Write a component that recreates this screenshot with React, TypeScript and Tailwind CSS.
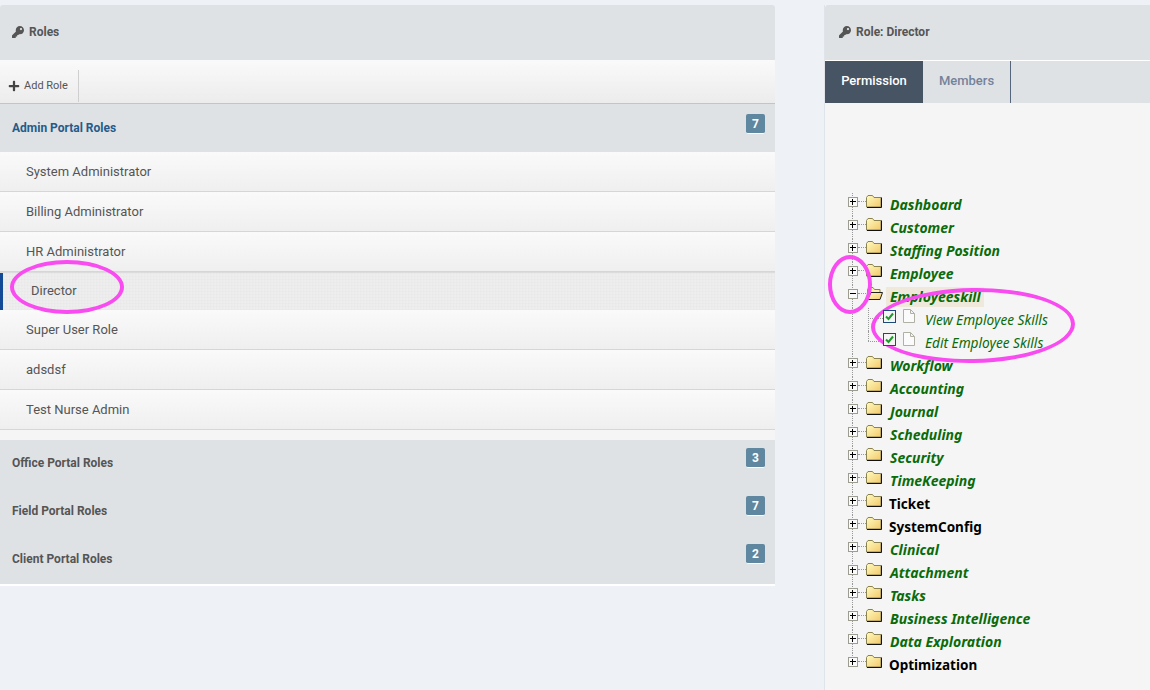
import { FaKey, FaPlus } from "react-icons/fa";

const adminRoles = ["System Administrator", "Billing Administrator", "HR Administrator", "Director", "Super User Role", "adsdsf", "Test Nurse Admin"];

const otherGroups = [
  { name: "Office Portal Roles", count: 3 },
  { name: "Field Portal Roles", count: 7 },
  { name: "Client Portal Roles", count: 2 },
];

type Tone = "green" | "black";

const treeTop: { name: string; tone: Tone }[] = [
  { name: "Dashboard", tone: "green" },
  { name: "Customer", tone: "green" },
  { name: "Staffing Position", tone: "green" },
  { name: "Employee", tone: "green" },
];

const treeBottom: { name: string; tone: Tone }[] = [
  { name: "Workflow", tone: "green" },
  { name: "Accounting", tone: "green" },
  { name: "Journal", tone: "green" },
  { name: "Scheduling", tone: "green" },
  { name: "Security", tone: "green" },
  { name: "TimeKeeping", tone: "green" },
  { name: "Ticket", tone: "black" },
  { name: "SystemConfig", tone: "black" },
  { name: "Clinical", tone: "green" },
  { name: "Attachment", tone: "green" },
  { name: "Tasks", tone: "green" },
  { name: "Business Intelligence", tone: "green" },
  { name: "Data Exploration", tone: "green" },
  { name: "Optimization", tone: "black" },
];

function Badge({ count }: { count: number }) {
  return (
    <span className="flex h-[20px] w-[19px] items-center justify-center rounded-[2px] border-b border-b-white bg-[#5f87a0] text-[12px] font-bold text-white">
      {count}
    </span>
  );
}

function Folder({ open }: { open?: boolean }) {
  return (
    <svg width="17" height="15" viewBox="0 0 17 15" className="mt-[1px] shrink-0">
      <defs>
        <linearGradient id="folderFill" x1="0" y1="0" x2="1" y2="1">
          <stop offset="0" stopColor="#fffbc0" />
          <stop offset="1" stopColor="#f3c96a" />
        </linearGradient>
      </defs>
      {open ? (
        <>
          <path d="M1.5 13.5 V3.5 L3 1.5 H7 L8.5 3.5 H14 V6" fill="#fbf0b0" stroke="#8a8350" />
          <path d="M1.5 13.5 L5 6.5 H16.5 L14 13.5 Z" fill="url(#folderFill)" stroke="#222" />
        </>
      ) : (
        <>
          <path d="M0.5 3.5 L2 1.5 H6.5 L8 3.5 H15 V13 H0.5 Z" fill="url(#folderFill)" stroke="#8a8350" />
          <path d="M15.5 3.5 V13.5 H1" fill="none" stroke="#111" />
        </>
      )}
    </svg>
  );
}

function Toggle({ open }: { open?: boolean }) {
  return (
    <svg width="10" height="10" viewBox="0 0 10 10" className="absolute left-[23px] top-[4px] z-10">
      <rect x="0.5" y="0.5" width="9" height="9" fill="#fafafa" stroke="#9c9c90" />
      <path d={open ? "M2 4.5 H8" : "M2 4.5 H8 M4.5 2 V8"} stroke="#000" fill="none" />
    </svg>
  );
}

function TreeRow({ name, tone, open, last }: { name: string; tone: Tone; open?: boolean; last?: boolean }) {
  return (
    <div className="relative flex h-[23px] items-start pl-[41px]">
      <span className={`absolute left-[27px] top-0 border-l border-dotted border-[#999] ${last ? "h-[9px]" : "h-[23px]"}`} />
      <span className="absolute left-[33px] top-[8px] w-[8px] border-t border-dotted border-[#999]" />
      <Toggle open={open} />
      <Folder open={open} />
      {tone === "green" ? (
        <span
          className={`mt-[2px] font-['Noto_Sans',sans-serif] text-[14px] leading-[20px] font-bold italic text-[#0a6b0a] ${open ? "ml-[3px] bg-[#efe9dc] pr-[3px] pl-[4px]" : "ml-[6px] px-[1px]"}`}
        >
          {name}
        </span>
      ) : (
        <span className="ml-[6px] mt-[2px] font-['Noto_Sans',sans-serif] text-[13.5px] leading-[20px] font-bold text-black">{name}</span>
      )}
    </div>
  );
}

function LeafRow({ name, bottom }: { name: string; bottom?: boolean }) {
  return (
    <div className="relative flex h-[23px] items-start pl-[58px]">
      <span className="absolute left-[27px] top-0 h-[23px] border-l border-dotted border-[#999]" />
      <span className={`absolute left-[43px] top-0 border-l border-dotted border-[#999] ${bottom ? "h-[10px]" : "h-[23px]"}`} />
      <span className="absolute left-[43px] top-[10px] w-[15px] border-t border-dotted border-[#999]" />
      <span className="relative z-10 mt-[2px] flex h-[13px] w-[13px] items-center justify-center border border-[#1c4a7a] bg-[#f5f5f5]">
        <svg width="9" height="9" viewBox="0 0 9 9">
          <path d="M1 4.5 L3.5 7 L8 1.5" fill="none" stroke="#1e9a2a" strokeWidth="2" />
        </svg>
      </span>
      <svg width="12" height="14" viewBox="0 0 12 14" className="ml-[7px] mt-[1px]">
        <path d="M0.5 0.5 H7.5 L11.5 4.5 V13.5 H0.5 Z M7.5 0.5 V4.5 H11.5" fill="#fbfbfb" stroke="#b0b0a4" />
      </svg>
      <span className="ml-[10px] mt-[2px] font-['Noto_Sans',sans-serif] text-[13.7px] leading-[20px] italic text-[#0a6b0a]">{name}</span>
    </div>
  );
}

export default function App() {
  return (
    <div className="relative flex h-[690px] w-[1150px] overflow-hidden bg-[#eef1f6] pt-[5px] font-['Roboto',sans-serif]">
      {/* left column */}
      <div className="w-[775px] self-start">
        <div className="flex h-[55px] items-center gap-[5px] rounded-t-[3px] bg-[#dfe2e5] pb-[2px] pl-[12px] text-[12px] font-bold text-[#555]">
          <FaKey className="text-[12px] text-[#555]" />
          Roles
        </div>
        <div className="flex h-[44px] items-stretch border-b border-[#c4c4c4] bg-linear-to-b from-[#fafafa] to-[#ececec] pt-[10px]">
          <div className="flex h-[32px] items-center gap-[4px] border-r border-[#cfcfcf] pr-[10px] pl-[8px] text-[11px] text-[#555]">
            <FaPlus className="text-[12px] text-[#444]" />
            Add Role
          </div>
        </div>
        <div className="flex h-[48px] items-start justify-between bg-[#dfe2e5] pt-[10px] pr-[10px] pl-[12px]">
          <span className="mt-[5px] text-[12px] font-bold text-[#245b8a]">Admin Portal Roles</span>
          <Badge count={7} />
        </div>
        {adminRoles.map((role) =>
          role === "Director" ? (
            <div
              key={role}
              className="relative flex h-[38px] items-center border-t border-[#dcdcdc] bg-[#eeeeee] bg-[repeating-linear-gradient(0deg,rgba(0,0,0,0.025)_0px,transparent_1px,transparent_3px),repeating-linear-gradient(90deg,rgba(0,0,0,0.02)_0px,transparent_2px,transparent_3px)] pb-[2px] pl-[31px] text-[13px] text-[#555]"
            >
              <span className="absolute top-0 bottom-0 left-0 w-[3px] bg-[#134a95]" />
              {role}
            </div>
          ) : (
            <div
              key={role}
              className="flex h-[40px] items-center border-b border-[#d6d6d6] bg-linear-to-b from-[#fafafa] to-[#efefef] pl-[26px] text-[13px] text-[#555]"
            >
              {role}
            </div>
          ),
        )}
        <div className="h-[10px] bg-[#f5f5f5]" />
        <div className="border-b-2 border-white">
          {otherGroups.map((group) => (
            <div key={group.name} className="flex h-[48px] items-start justify-between bg-[#dfe2e5] pt-[8px] pr-[10px] pl-[12px]">
              <span className="mt-[6px] text-[12px] font-bold text-[#555]">{group.name}</span>
              <Badge count={group.count} />
            </div>
          ))}
        </div>
      </div>

      {/* right column */}
      <div className="ml-[49px] flex min-w-0 flex-1 flex-col border-l border-[#dfe3ea] bg-[#f5f5f5]">
        <div className="flex h-[55px] items-center gap-[5px] rounded-tl-[3px] bg-[#dfe2e5] pb-[2px] pl-[14px] text-[12px] font-bold text-[#555]">
          <FaKey className="text-[12px] text-[#555]" />
          Role: Director
        </div>
        <div className="flex h-[43px] border-t border-white bg-[#dfe2e5] text-[13px]">
          <div className="flex w-[98px] items-center justify-center bg-[#475463] pb-[2px] font-medium text-white">Permission</div>
          <div className="flex w-[88px] items-center justify-center border-r border-[#56657c] pb-[2px] font-medium text-[#74839b]">Members</div>
        </div>
        <div className="pt-[90px]">
          {treeTop.map((node) => (
            <TreeRow key={node.name} {...node} />
          ))}
          <TreeRow name="Employeeskill" tone="green" open />
          <LeafRow name="View Employee Skills" />
          <LeafRow name="Edit Employee Skills" bottom />
          {treeBottom.map((node, i) => (
            <TreeRow key={node.name} {...node} last={i === treeBottom.length - 1} />
          ))}
        </div>
      </div>

      {/* pink hand-drawn annotations */}
      <span className="absolute left-[10px] top-[260px] h-[54px] w-[114px] rounded-[50%] border-[4px] border-[#f84cf0]" />
      <span className="absolute left-[828px] top-[255px] h-[59px] w-[44px] rounded-[50%] border-[4px] border-[#f84cf0]" />
      <span className="absolute left-[871px] top-[288px] h-[75px] w-[204px] -rotate-1 rounded-[50%] border-[4px] border-[#f84cf0]" />
    </div>
  );
}
